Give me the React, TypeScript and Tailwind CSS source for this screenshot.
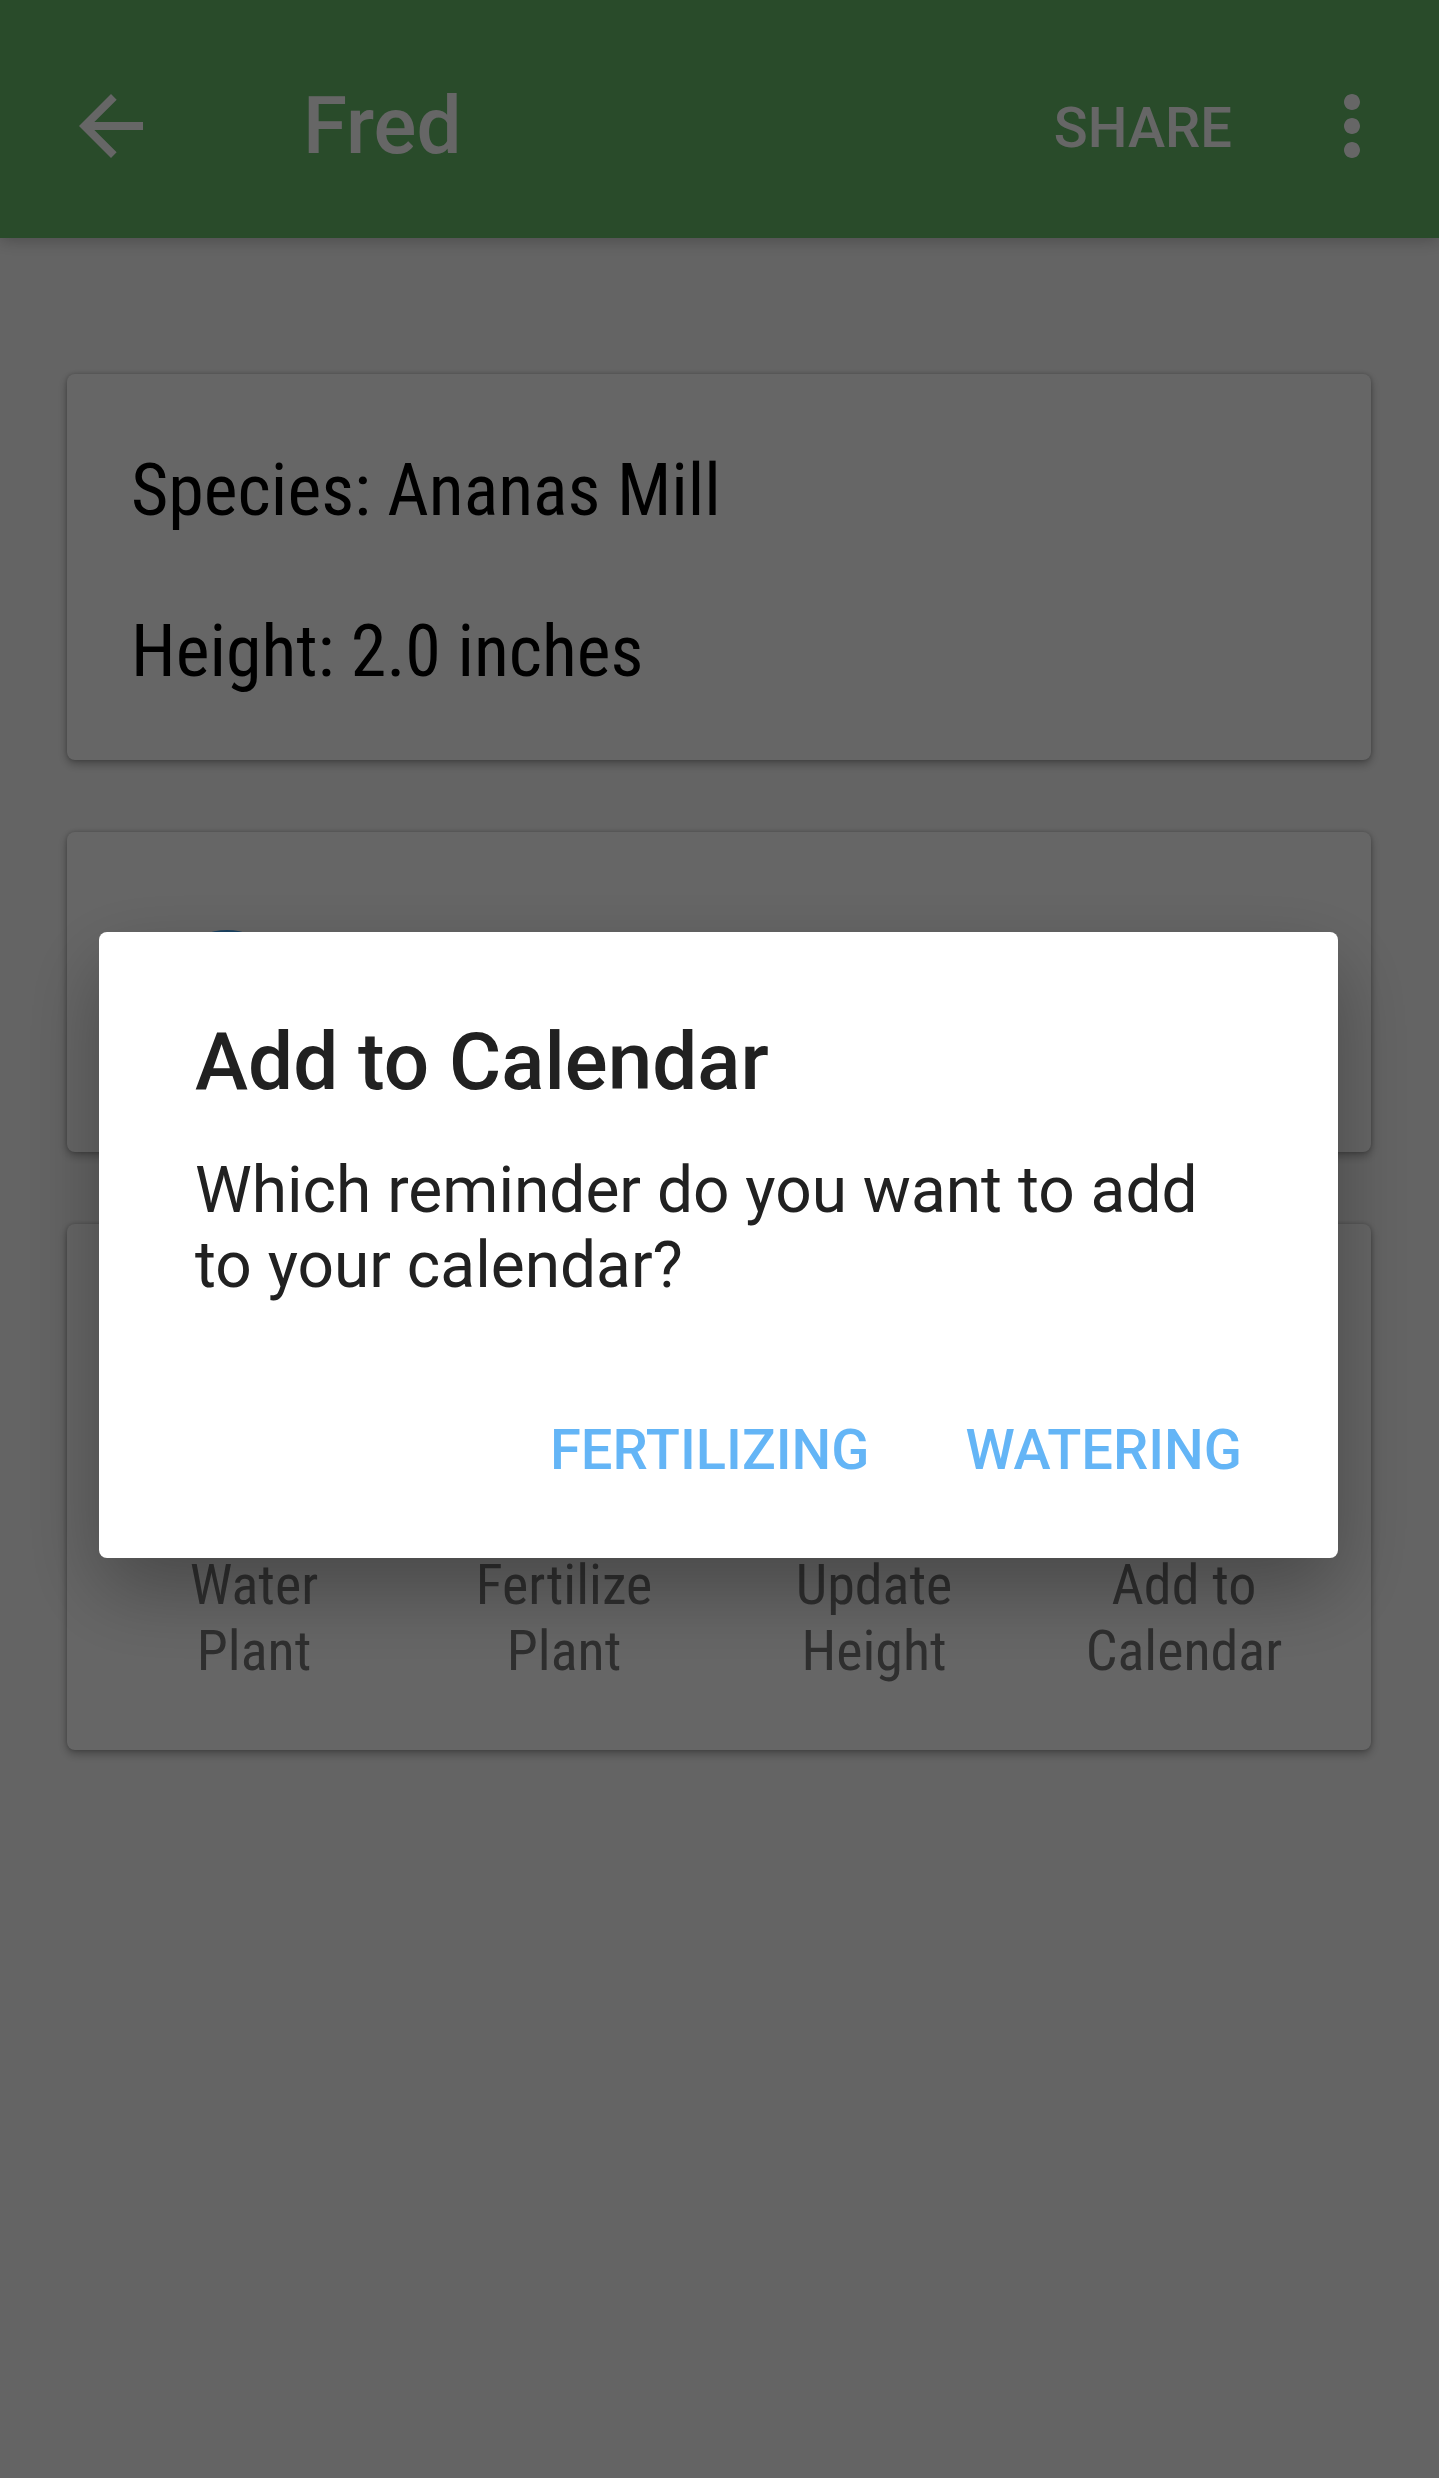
import type { ReactNode } from "react";

const actions: string[][] = [
  ["Water", "Plant"],
  ["Fertilize", "Plant"],
  ["Update", "Height"],
  ["Add to", "Calendar"],
];

function Card({ children }: { children: ReactNode }) {
  return (
    <section className="rounded-lg bg-white shadow-[0_4px_10px_rgba(0,0,0,0.3),0_0_4px_rgba(0,0,0,0.2)]">
      {children}
    </section>
  );
}

function Header() {
  return (
    <header className="flex h-[238px] items-center bg-[#66bb6a] pt-[14px] pr-[39px] pl-[63px] text-white shadow-[0_2px_16px_rgba(0,0,0,0.25)]">
      <button type="button" aria-label="Back" className="size-24">
        <svg viewBox="0 0 24 24" className="size-24" fill="currentColor">
          <path d="M20 11H7.83l5.59-5.59L12 4l-8 8 8 8 1.41-1.41L7.83 13H20v-2z" />
        </svg>
      </button>
      <h1 className="ml-36 flex-1 text-[80px] leading-[94px] font-medium">Fred</h1>
      <button type="button" className="pt-1 text-[56px] leading-[66px] font-medium uppercase">
        Share
      </button>
      <button type="button" aria-label="More options" className="ml-[72px] size-24">
        <svg viewBox="0 0 24 24" className="size-24" fill="currentColor">
          <path d="M12 8c1.1 0 2-.9 2-2s-.9-2-2-2-2 .9-2 2 .9 2 2 2zm0 2c-1.1 0-2 .9-2 2s.9 2 2 2 2-.9 2-2-.9-2-2-2zm0 6c-1.1 0-2 .9-2 2s.9 2 2 2 2-.9 2-2-.9-2-2-2z" />
        </svg>
      </button>
    </header>
  );
}

function ReminderDialog() {
  return (
    <div className="fixed inset-0 flex items-center justify-center bg-black/60 pt-3 pr-[101px] pl-[99px]">
      <div
        role="dialog"
        aria-modal="true"
        aria-labelledby="dialog-title"
        className="w-full rounded-lg bg-white text-[#212121] shadow-[0_32px_80px_rgba(0,0,0,0.3)]"
      >
        <div className="px-24 pt-[83px]">
          <h2 id="dialog-title" className="text-[80px] leading-[94px] font-medium">
            Add to Calendar
          </h2>
          <p className="mt-11 text-[64px] leading-[75px]">
            Which reminder do you want to add to your calendar?
          </p>
        </div>
        <div className="mt-[75px] flex justify-end gap-8 px-16 pb-9 text-[56px] leading-[66px] font-medium text-[#64b5f6]">
          <button type="button" className="h-36 px-8 uppercase">Fertilizing</button>
          <button type="button" className="h-36 px-8 uppercase">Watering</button>
        </div>
      </div>
    </div>
  );
}

export default function App() {
  return (
    <div className="min-h-screen bg-[#fafafa] font-['Roboto',sans-serif]">
      <Header />
      <main className="flex flex-col gap-[72px] pt-[136px] pr-[68px] pb-16 pl-[67px] font-['Roboto_Condensed','Roboto',sans-serif]">
        <Card>
          <div className="flex flex-col gap-[77px] px-16 pt-[75px] pb-[66px] text-[72px] leading-[84px] text-black">
            <p>Species: Ananas Mill</p>
            <p>Height: 2.0 inches</p>
          </div>
        </Card>
        <Card>
          <div className="flex h-80 items-center px-24">
            <span className="mt-1 size-32 rounded-full bg-[#42a5f5]" />
          </div>
        </Card>
        <Card>
          <div className="grid grid-cols-4 px-8 pt-[72px] pb-[66px] text-[56px] leading-[66px] text-[#757575]">
            {actions.map(([first, second]) => (
              <button key={first} type="button" className="flex flex-col items-center">
                <span className="mb-16 size-48 rounded-full" />
                <span>{first}</span>
                <span>{second}</span>
              </button>
            ))}
          </div>
        </Card>
      </main>
      <ReminderDialog />
    </div>
  );
}
